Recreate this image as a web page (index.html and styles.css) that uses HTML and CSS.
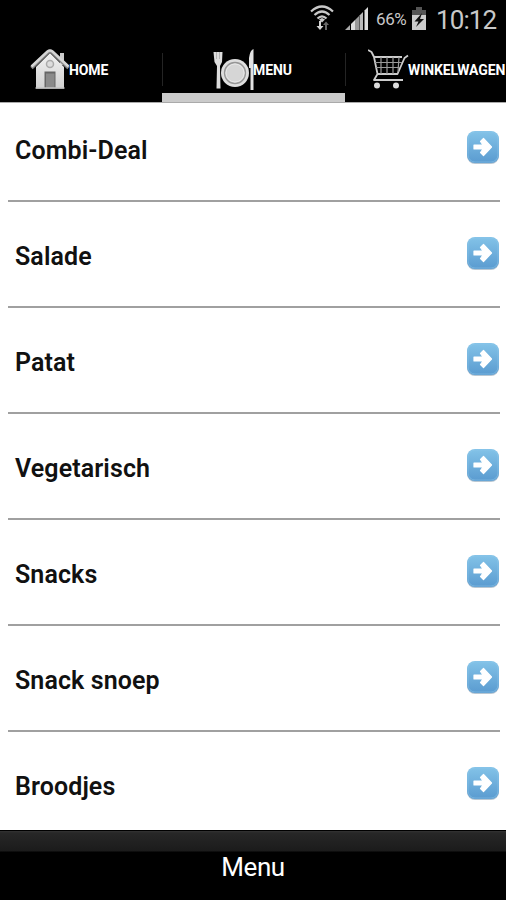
FILE: index.html
```html
<!DOCTYPE html>
<html lang="nl">
<head>
<meta charset="utf-8">
<title>Menu</title>
<link rel="stylesheet" href="styles.css">
</head>
<body>
<svg class="defs" width="0" height="0" aria-hidden="true">
  <defs>
    <linearGradient id="blue" x1="0" y1="0" x2="0" y2="1"><stop offset="0" stop-color="#83c3e8"/><stop offset="1" stop-color="#5a9bd0"/></linearGradient>
    <linearGradient id="silver" x1="0" y1="0" x2="0" y2="1"><stop offset="0" stop-color="#f2f2f2"/><stop offset="1" stop-color="#d0d0d0"/></linearGradient>
    <symbol id="arrow" viewBox="0 0 34 35">
      <rect x="1" y="2" width="32" height="32" rx="8" fill="#b9c7d2"/>
      <rect x="1" y="1" width="32" height="32" rx="8" fill="url(#blue)"/>
      <rect x="2" y="2" width="30" height="30" rx="7" fill="none" stroke="#8fc9eb" stroke-opacity=".5"/>
      <path d="M8 15H17L14.500 11.500L17.500 8.500L25.500 17L17.500 25.500L14.500 22.500L17 19H8z" fill="#fff" stroke="#fff" stroke-width="1.200" stroke-linejoin="round"/>
    </symbol>
  </defs>
</svg>
<header class="status">
  <svg class="wifi" viewBox="0 0 24 28" width="24" height="28">
    <g fill="none" stroke="#c8c8c8" stroke-width="2.200"><path d="M1 7.500Q12 -2.500 23 7.500"/><path d="M4.500 11Q12 4 19.500 11"/><path d="M7.500 14.500Q12 10 16.500 14.500"/></g>
    <path d="M9 15.500L12 14L15 15.500L12 18.500Z" fill="#c8c8c8"/>
    <path d="M9 17h2v5h2.500L10 26L6.500 22H9z" fill="#d5d5d5"/>
    <path d="M15 26h2v-5h2L16 17.500L13 21h2z" fill="#686868"/>
  </svg>
  <svg class="signal" viewBox="0 0 24 24" width="24" height="24">
    <path d="M0 23L5 18V23z" fill="#aaa"/><path d="M6 23V17L10 13V23z" fill="#ddd"/><path d="M10 23V13L14 9V23z" fill="#999"/><path d="M14.500 23V8.500L18 5V23z" fill="#bbb"/><path d="M19.500 23V3.500L23 0V23z" fill="#ddd"/>
  </svg>
  <span class="percent">66%</span>
  <svg class="battery" viewBox="0 0 14 23" width="14" height="23">
    <path d="M4 0H10V3H14V9H0V3H4z" fill="#555"/><path d="M0 8H14V23H0z" fill="#ccc"/>
    <path d="M10 6L2.500 14.500H6.500L4 20L12 12H8z" fill="#111"/>
  </svg>
  <time class="clock">10:12</time>
</header>
<nav class="tabs">
  <div class="tab home">
    <svg viewBox="0 0 40 41" width="40" height="41">
      <path d="M30 4H34V16H30z" fill="#ccc"/>
      <path d="M6 18L20 4L34 18V39.500H6z" fill="url(#silver)"/>
      <path d="M1.500 19L17.500 3.500Q20 1.500 22.500 3.500L38.500 19" fill="none" stroke="#888" stroke-width="3.500"/>
      <path d="M1.500 17.500L17.500 2.500Q20 .5 22.500 2.500L38.500 17.500" fill="none" stroke="#d6d6d6" stroke-width="2.600"/>
      <circle cx="20" cy="15" r="3.500" fill="#ddd" stroke="#aaa" stroke-width="1.500"/>
      <path d="M14.500 22.500H25.500V39H14.500z" fill="#666"/><path d="M16 24.500H24.500V39H16z" fill="#8a8a8a"/>
      <path d="M5.500 39H34.500" stroke="#c5c5c5" stroke-width="1.500"/>
    </svg>
    <span>HOME</span>
  </div>
  <div class="tab menu active">
    <svg viewBox="0 0 41 42" width="41" height="42">
      <path d="M.5 3H9.500L9 13L7 17L7.500 39.500H3.500L4 17L1.500 13z" fill="#ddd"/>
      <path d="M3.500 3V10M6.500 3V10" stroke="#a0a0a0" stroke-width=".7"/>
      <circle cx="22" cy="24" r="14" fill="#dedede"/>
      <circle cx="22" cy="24" r="10.500" fill="#d4d4d4" stroke="#969696" stroke-width="1.300"/>
      <circle cx="22" cy="24" r="9" fill="#d6d6d6" stroke="#e8e8e8"/>
      <path d="M40.500 0V41H37.500V19H36V9Q37 1 40.500 0z" fill="#e2e2e2"/>
    </svg>
    <span>MENU</span>
  </div>
  <div class="tab cart">
    <svg viewBox="0 0 41 41" width="41" height="41">
      <g fill="none" stroke="#ccc" stroke-linejoin="round"><path d="M0 1L3.500 3L6 8L9.500 25L6 31H35" stroke-width="1.800"/><path d="M6 8H34M40 6.500L36.500 9L29.500 25H9.500" stroke-width="1.800"/><path d="M7 13.500H34M8 18.500H32M13 8V25M19 8V25M25 8V25M31 8L30 23" stroke="#999" stroke-width="1.200"/></g>
      <circle cx="9" cy="36.500" r="3" fill="#ddd"/><circle cx="28" cy="36.500" r="3" fill="#ddd"/>
    </svg>
    <span>WINKELWAGEN</span>
  </div>
</nav>
<main>
  <ul class="list">
    <li><span>Combi-Deal</span><svg><use href="#arrow"/></svg></li>
    <li><span>Salade</span><svg><use href="#arrow"/></svg></li>
    <li><span>Patat</span><svg><use href="#arrow"/></svg></li>
    <li><span>Vegetarisch</span><svg><use href="#arrow"/></svg></li>
    <li><span>Snacks</span><svg><use href="#arrow"/></svg></li>
    <li><span>Snack snoep</span><svg><use href="#arrow"/></svg></li>
    <li><span>Broodjes</span><svg><use href="#arrow"/></svg></li>
  </ul>
</main>
<footer class="bottom">Menu</footer>
</body>
</html>
```
FILE: styles.css
```css
* { box-sizing: border-box; }
body {
  margin: 0;
  width: 506px;
  height: 900px;
  overflow: hidden;
  display: flex;
  flex-direction: column;
  background: #fff;
  font-family: Roboto, "Liberation Sans", sans-serif;
}
.defs { position: absolute; }
svg { flex: none; display: block; }
.status {
  flex: none;
  height: 38px;
  display: flex;
  align-items: flex-start;
  justify-content: flex-end;
  padding-right: 9px;
  background: #000;
  color: #c8c8c8;
}
.wifi { margin: 4px 11px 0 0; }
.signal { margin: 7px 7px 0 0; }
.percent { font-size: 17px; line-height: 20px; margin: 9px 5px 0 0; width: 31px; letter-spacing: -0.4px; }
.battery { margin: 7px 10px 0 0; }
.clock { font-size: 26px; line-height: 30px; margin-top: 5px; width: 61px; letter-spacing: -0.9px; white-space: nowrap; }
.tabs {
  flex: none;
  height: 65px;
  display: grid;
  grid-template-columns: 162px 183px 161px;
  background: #000;
  border-bottom: 1px solid #aaa;
  color: #fff;
}
.tab {
  display: flex;
  align-items: flex-start;
  padding-top: 11px;
  min-width: 0;
  background: linear-gradient(#242424, #242424) left 15px / 1px 33px no-repeat;
}
.tab span { font-size: 14px; line-height: 20px; font-weight: 700; margin: 11px 0 0 -1px; white-space: nowrap; letter-spacing: -0.1px; }
.home { padding-left: 30px; background: none; }
.menu { padding-left: 51px; }
.active { border-bottom: 9px solid #cbcbcb; }
.cart { padding-left: 23px; overflow: hidden; }
main { flex: none; height: 727px; overflow: hidden; }
.list { list-style: none; margin: 0 6px 0 8px; padding: 0; }
.list li {
  height: 106px;
  display: flex;
  justify-content: space-between;
  align-items: flex-start;
  padding: 34px 0 0 7px;
  border-bottom: 2px solid #a0a0a0;
}
.list li:first-child { height: 99px; padding-top: 27px; }
.list span { font-size: 25px; line-height: 41px; font-weight: 600; color: #111; letter-spacing: 0.1px; }
.list svg { width: 34px; height: 35px; }
.bottom {
  flex: none;
  height: 70px;
  padding-top: 21px;
  border-top: 1px solid #000;
  background: linear-gradient(#333, #272727 2px, #1b1b1b 20px, #000 21px);
  color: #fff;
  font-size: 26px;
  line-height: 31px;
  letter-spacing: -0.4px;
  text-align: center;
}
```
